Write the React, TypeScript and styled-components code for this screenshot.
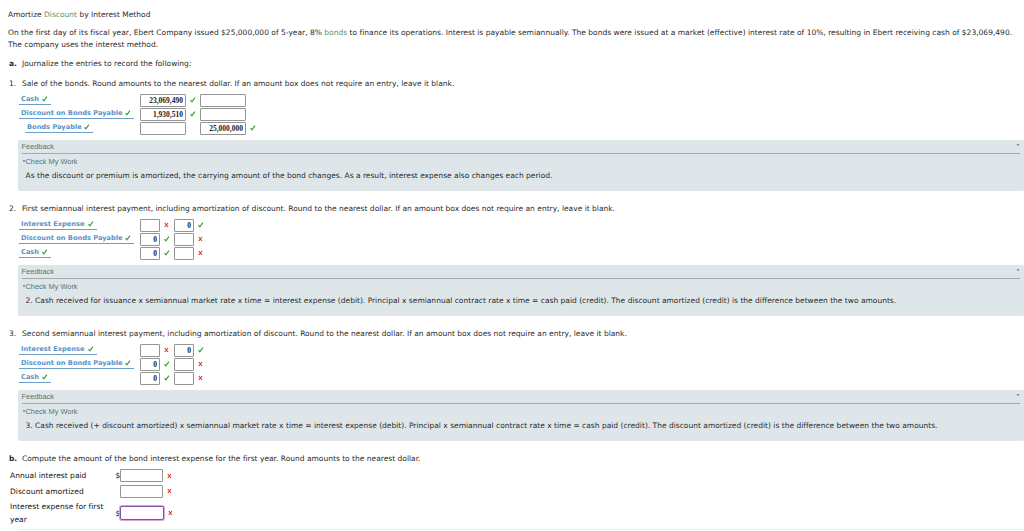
import React, { ReactNode } from "react";
import styled, { createGlobalStyle, css } from "styled-components";

type Mark = "ok" | "bad";

interface Cell {
  value?: string;
  mark?: Mark;
}

interface Entry {
  account: string;
  width: number;
  indent?: boolean;
  debit: Cell;
  credit: Cell;
}

interface Exercise {
  num: string;
  prompt: string;
  wide?: boolean;
  entries: Entry[];
  feedback: string;
}

const GlobalStyle = createGlobalStyle`
  body {
    margin: 0;
    background: #fff;
    overflow: hidden;
  }
  * {
    box-sizing: border-box;
  }
`;

const Page = styled.main`
  width: 1024px;
  height: 531px;
  padding-top: 8px;
  overflow: hidden;
  font-family: "DejaVu Sans", Verdana, sans-serif;
  font-size: 7.5px;
  line-height: 13px;
  letter-spacing: 0.004px;
  color: #2b2b2b;
`;

const Line = styled.div<{ $track?: number }>`
  height: 13px;
  padding-left: 8px;
  white-space: pre;
  letter-spacing: ${({ $track }) => $track ?? 0}px;
`;

const Intro = styled.div`
  padding: 6px 0;
  line-height: 12px;

  ${Line} {
    height: 12px;
  }
`;

const Term = styled.span`
  color: #55965a;
`;

const Section = styled.section`
  height: 125px;
`;

const Prompt = styled.div<{ $height?: number }>`
  display: flex;
  height: ${({ $height }) => $height ?? 17}px;
  padding-left: 9px;
  white-space: pre;
`;

const Marker = styled.span<{ $bold?: boolean }>`
  width: 13px;
  flex: none;
  font-weight: ${({ $bold }) => ($bold ? "bold" : "normal")};
`;

const EntryRow = styled.div`
  display: flex;
  height: 14px;
  padding-left: 19px;
`;

const AccountCell = styled.div<{ $indent?: boolean }>`
  width: 121px;
  flex: none;
  padding-left: ${({ $indent }) => ($indent ? 6 : 0)}px;
`;

const Account = styled.div<{ $width: number }>`
  display: flex;
  align-items: center;
  justify-content: space-between;
  width: ${({ $width }) => $width}px;
  height: 11px;
  padding: 0 3px 0 2px;
  border-bottom: 1px solid #6f9fc8;
  font-size: 6.65px;
  font-weight: bold;
  line-height: 11px;
  white-space: nowrap;
  color: #5b93c6;

  svg {
    flex: none;
  }
`;

const Field = styled.div<{ $width: number; $active?: boolean }>`
  width: ${({ $width }) => $width}px;
  height: 13px;
  flex: none;
  padding-right: 2px;
  border: 1px solid #949494;
  border-radius: 1px;
  background: #fff;
  font: bold 7.5px/12px "Liberation Serif", serif;
  text-align: right;
  color: #222;
  ${({ $active }) =>
    $active &&
    css`
      height: 14px;
      border-color: #8250a5;
      border-radius: 2px;
      box-shadow: 0 0 0 1px #dda3d2;
    `}
`;

const MarkSlot = styled.span`
  display: flex;
  align-items: center;
  width: 14px;
  height: 12px;
  flex: none;
  padding-left: 4px;
`;

const FeedbackBox = styled.div`
  height: 51px;
  margin: 4px 0 0 17.5px;
  padding: 0 4px;
  border-radius: 2px;
  background: #dee6e9;
`;

const FeedbackHead = styled.div`
  display: flex;
  justify-content: space-between;
  height: 14px;
  border-bottom: 1px solid #a3abae;
  font: 7.4px/14px "Liberation Sans", sans-serif;
  color: #567471;
`;

const CheckWork = styled.div`
  display: flex;
  align-items: center;
  height: 15px;
  font: 7.4px/15px "Liberation Sans", sans-serif;
  color: #567471;
`;

const FeedbackText = styled.div`
  padding-left: 4px;
  white-space: pre;
`;

const AmountRow = styled.div<{ $height: number }>`
  display: flex;
  align-items: center;
  height: ${({ $height }) => $height}px;
  padding-left: 10px;
`;

const AmountLabel = styled.div`
  width: 105px;
  flex: none;
  white-space: pre;
  letter-spacing: 0.03px;
  color: #111;
`;

const Currency = styled.span`
  width: 5px;
  flex: none;
  padding-left: 0.6px;
  color: #111;
`;

const Divider = styled.div`
  height: 1px;
  margin: 3px 0 0 18px;
  background: #eee;
`;

const Check = () => (
  <svg width="6" height="6" viewBox="0 0 6 6">
    <path d="M0.5 3.2 L1.9 4.9 L4.9 0.7" fill="none" stroke="#3f9a35" strokeWidth="1.15" />
  </svg>
);

const Cross = () => (
  <svg width="5" height="6" viewBox="0 0 5 6">
    <path d="M0.8 1 L4 5 M4 1 L0.8 5" fill="none" stroke="#f0332b" strokeWidth="1.2" />
  </svg>
);

const Caret = ({ top = 0 }: { top?: number }) => (
  <svg width="4" height="15" viewBox="0 0 4 15">
    <path d={`M0.5 ${top} h3 l-1.5 2.5 z`} fill="#858d90" />
  </svg>
);

const Status = ({ mark }: { mark?: Mark }) => (
  <MarkSlot>
    {mark === "ok" && <Check />}
    {mark === "bad" && <Cross />}
  </MarkSlot>
);

const semiannualEntries: Entry[] = [
  { account: "Interest Expense", width: 78, debit: { mark: "bad" }, credit: { value: "0", mark: "ok" } },
  { account: "Discount on Bonds Payable", width: 115, debit: { value: "0", mark: "ok" }, credit: { mark: "bad" } },
  { account: "Cash", width: 32, debit: { value: "0", mark: "ok" }, credit: { mark: "bad" } },
];

const exercises: Exercise[] = [
  {
    num: "1.",
    prompt:
      "Sale of the bonds. Round amounts to the nearest dollar. If an amount box does not require an entry, leave it blank.",
    wide: true,
    entries: [
      { account: "Cash", width: 32, debit: { value: "23,069,490", mark: "ok" }, credit: {} },
      { account: "Discount on Bonds Payable", width: 115, debit: { value: "1,930,510", mark: "ok" }, credit: {} },
      { account: "Bonds Payable", width: 68, indent: true, debit: {}, credit: { value: "25,000,000", mark: "ok" } },
    ],
    feedback:
      "As the discount or premium is amortized, the carrying amount of the bond changes. As a result, interest expense also changes each period.",
  },
  {
    num: "2.",
    prompt:
      "First semiannual interest payment, including amortization of discount. Round to the nearest dollar. If an amount box does not require an entry, leave it blank.",
    entries: semiannualEntries,
    feedback:
      "2. Cash received for issuance x semiannual market rate x time = interest expense (debit). Principal x semiannual contract rate x time = cash paid (credit). The discount amortized (credit) is the difference between the two amounts.",
  },
  {
    num: "3.",
    prompt:
      "Second semiannual interest payment, including amortization of discount. Round to the nearest dollar. If an amount box does not require an entry, leave it blank.",
    entries: semiannualEntries,
    feedback:
      "3. Cash received (+ discount amortized) x semiannual market rate x time = interest expense (debit). Principal x semiannual contract rate x time = cash paid (credit). The discount amortized (credit) is the difference between the two amounts.",
  },
];

const Feedback = ({ children }: { children: ReactNode }) => (
  <FeedbackBox>
    <FeedbackHead>
      <span>Feedback</span>
      <Caret top={4} />
    </FeedbackHead>
    <CheckWork>
      <Caret top={6} />
      Check My Work
    </CheckWork>
    <FeedbackText>{children}</FeedbackText>
  </FeedbackBox>
);

const App = () => {
  return (
    <Page>
      <GlobalStyle />
      <Line>
        Amortize <Term>Discount</Term> by Interest Method
      </Line>
      <Intro>
        <Line $track={0.015}>
          On the first day of its fiscal year, Ebert Company issued $25,000,000 of 5-year, 8% <Term>bonds</Term> to
          {" finance its operations. Interest is payable semiannually. The bonds were issued at a market (effective) interest rate of 10%, resulting in Ebert receiving cash of $23,069,490."}
        </Line>
        <Line>The company uses the interest method.</Line>
      </Intro>
      <Prompt $height={20}>
        <Marker $bold>a.</Marker>Journalize the entries to record the following:
      </Prompt>
      {exercises.map((ex) => (
        <Section key={ex.num}>
          <Prompt>
            <Marker>{ex.num}</Marker>
            {ex.prompt}
          </Prompt>
          {ex.entries.map((entry) => (
            <EntryRow key={entry.account}>
              <AccountCell $indent={entry.indent}>
                <Account $width={entry.width}>
                  {entry.account}
                  <Check />
                </Account>
              </AccountCell>
              <Field $width={ex.wide ? 46 : 20}>{entry.debit.value}</Field>
              <Status mark={entry.debit.mark} />
              <Field $width={ex.wide ? 46 : 20}>{entry.credit.value}</Field>
              <Status mark={entry.credit.mark} />
            </EntryRow>
          ))}
          <Feedback>{ex.feedback}</Feedback>
        </Section>
      ))}
      <Prompt>
        <Marker $bold>b.</Marker>Compute the amount of the bond interest expense for the first year. Round amounts to the
        {" nearest dollar."}
      </Prompt>
      <AmountRow $height={13}>
        <AmountLabel>Annual interest paid</AmountLabel>
        <Currency>$</Currency>
        <Field $width={43} />
        <Status mark="bad" />
      </AmountRow>
      <AmountRow $height={18}>
        <AmountLabel>Discount amortized</AmountLabel>
        <Currency />
        <Field $width={43} />
        <Status mark="bad" />
      </AmountRow>
      <AmountRow $height={26}>
        <AmountLabel>{"Interest expense for first\nyear"}</AmountLabel>
        <Currency>$</Currency>
        <Field $width={44} $active />
        <Status mark="bad" />
      </AmountRow>
      <Divider />
    </Page>
  );
};

export default App;
